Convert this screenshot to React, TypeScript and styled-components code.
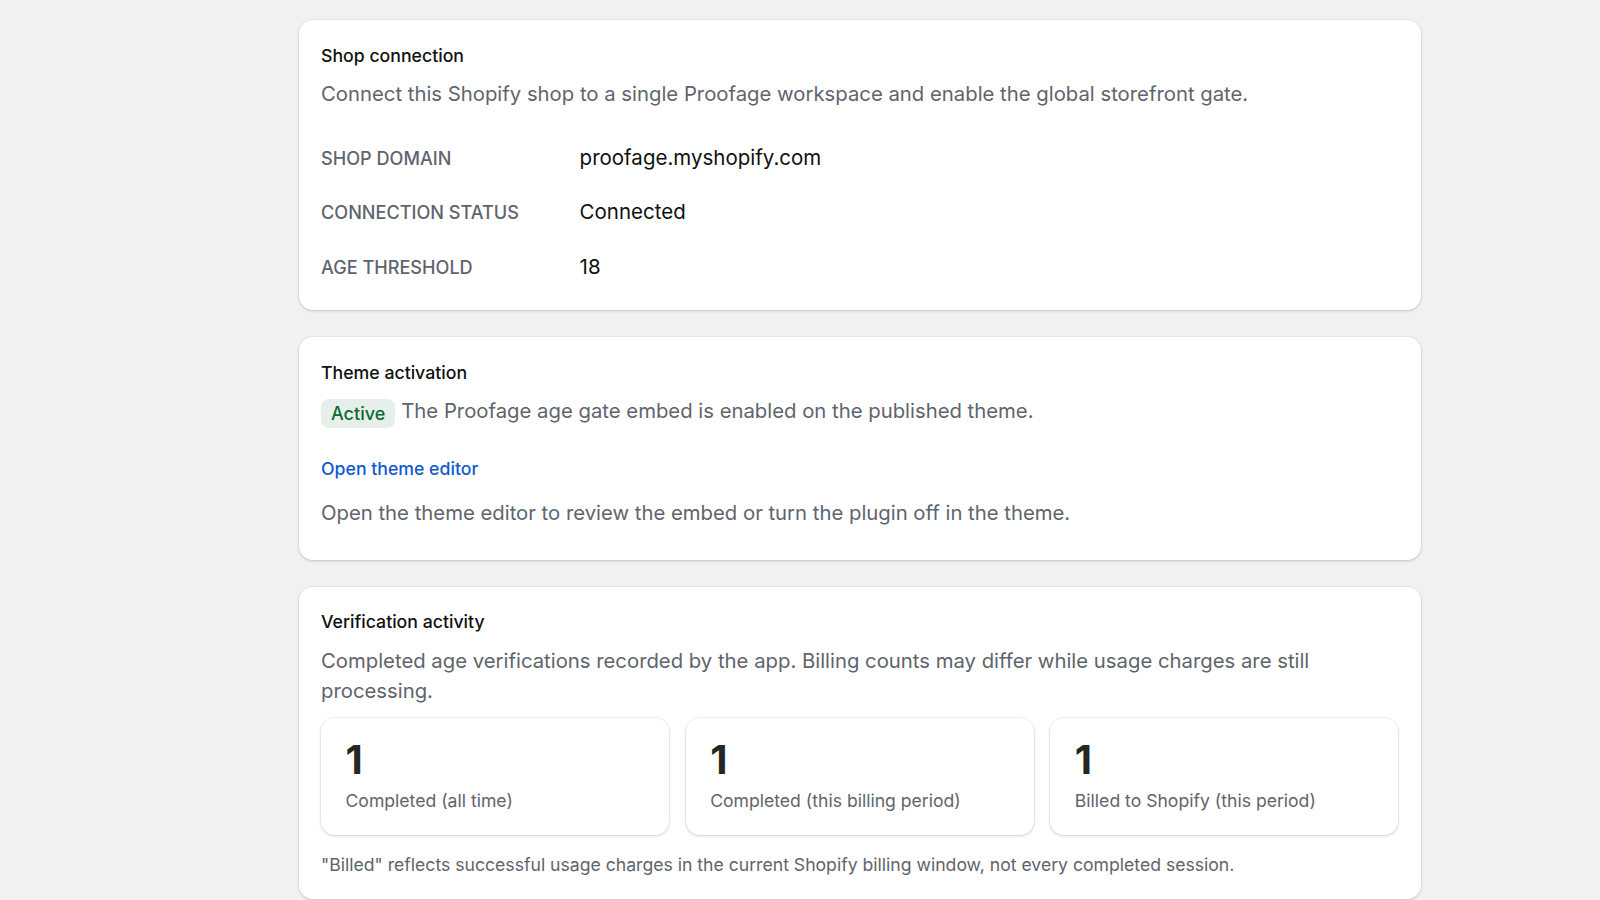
import React from "react";
import styled, { createGlobalStyle } from "styled-components";

const Global = createGlobalStyle`
  html, body { margin: 0; padding: 0; background: #f1f1f1; height: 100%; overflow: hidden; }
  body { font-family: Inter, "Noto Sans", sans-serif; color: #111; }
  * { box-sizing: border-box; }
`;

const Page = styled.main`
  width: 1121.5px;
  margin-left: 299px;
  padding-top: 20px;
  display: flex;
  flex-direction: column;
  gap: 27px;
`;

const Card = styled.section<{ $pt?: number; $pb: number }>`
  background: #fff;
  border-radius: 14px;
  padding: ${(p) => p.$pt ?? 24}px 22px ${(p) => p.$pb}px;
  box-shadow: 0 1px 3px rgba(0,0,0,0.17), 0 0 0 1px rgba(0,0,0,0.03);
`;

const Title = styled.h2`
  margin: 0;
  font-size: 17.7px;
  line-height: 24px;
  font-weight: 500;
  color: #111;
`;

const Body = styled.p<{ $mt?: number }>`
  margin: ${(p) => p.$mt ?? 0}px 0 0;
  font-size: 20.31px;
  line-height: 30px;
  color: #5f646c;
`;

const Rows = styled.dl`
  margin: 34px 0 0;
  display: grid;
  grid-template-columns: 258.6px 1fr;
  row-gap: 24.4px;
  align-items: center;
`;

const Label = styled.dt`
  font-size: 18.1px;
  line-height: 30px;
  font-weight: 500;
  color: #5f646c;
  text-transform: uppercase;
`;

const Value = styled.dd`
  margin: 0;
  font-size: 20.5px;
  line-height: 30px;
  color: #111;
`;

const Badge = styled.span`
  display: inline-block;
  background: #e6efe9;
  color: #0c6b33;
  font-size: 18px;
  font-weight: 500;
  line-height: 29px;
  padding: 0 10px;
  border-radius: 8px;
  margin-right: 6px;
  vertical-align: -2px;
`;

const EditorLink = styled.a`
  display: block;
  margin-top: 29px;
  font-size: 17.7px;
  line-height: 24px;
  font-weight: 500;
  color: #1059cf;
  text-decoration: none;
`;

const Stats = styled.div`
  margin-top: 12px;
  display: grid;
  grid-template-columns: repeat(3, 1fr);
  gap: 16.5px;
`;

const Stat = styled.div`
  background: #fff;
  border-radius: 14px;
  padding: 18px 24.5px 22px;
  height: 117px;
  box-shadow: 0 1px 3px rgba(0,0,0,0.17), 0 0 0 1px rgba(0,0,0,0.04);
`;

const StatValue = styled.div`
  font-size: 40px;
  line-height: 48px;
  font-weight: 700;
  color: #262626;
`;

const StatLabel = styled.div`
  margin-top: 4px;
  font-size: 17.6px;
  line-height: 26px;
  color: #5f646c;
`;

const Note = styled.p`
  margin: 17px 0 0;
  font-size: 17.62px;
  line-height: 26px;
  color: #5f646c;
`;

const rows = [
  ["Shop domain", "proofage.myshopify.com"],
  ["Connection status", "Connected"],
  ["Age threshold", "18"],
];

const stats = ["Completed (all time)", "Completed (this billing period)", "Billed to Shopify (this period)"];

export default function App() {
  return (
    <>
      <Global />
      <Page>
        <Card $pb={28}>
          <Title>Shop connection</Title>
          <Body $mt={11}>Connect this Shopify shop to a single Proofage workspace and enable the global storefront gate.</Body>
          <Rows>
            {rows.map(([l, v]) => (
              <React.Fragment key={l}>
                <Label>{l}</Label>
                <Value>{v}</Value>
              </React.Fragment>
            ))}
          </Rows>
        </Card>
        <Card $pb={32}>
          <Title>Theme activation</Title>
          <Body $mt={11}>
            <Badge>Active</Badge>The Proofage age gate embed is enabled on the published theme.
          </Body>
          <EditorLink href="#">Open theme editor</EditorLink>
          <Body $mt={17}>Open the theme editor to review the embed or turn the plugin off in the theme.</Body>
        </Card>
        <Card $pt={23} $pb={21}>
          <Title>Verification activity</Title>
          <Body $mt={12}>Completed age verifications recorded by the app. Billing counts may differ while usage charges are still processing.</Body>
          <Stats>
            {stats.map((s) => (
              <Stat key={s}>
                <StatValue>1</StatValue>
                <StatLabel>{s}</StatLabel>
              </Stat>
            ))}
          </Stats>
          <Note>"Billed" reflects successful usage charges in the current Shopify billing window, not every completed session.</Note>
        </Card>
      </Page>
    </>
  );
}
